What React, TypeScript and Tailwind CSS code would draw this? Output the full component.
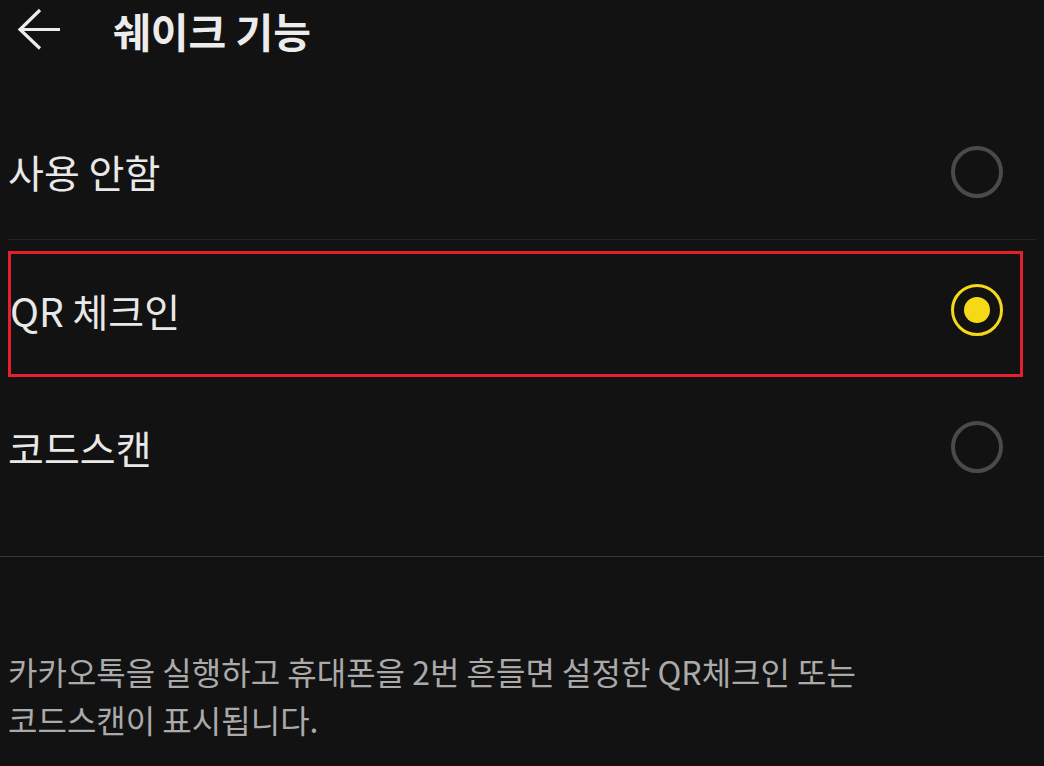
import React from "react";

const font = { fontFamily: '"Noto Sans CJK KR", "Noto Sans", sans-serif' };

function Radio({ checked }: { checked: boolean }) {
  return checked ? (
    <svg width="54" height="54" viewBox="0 0 54 54">
      <circle cx="27" cy="27" r="24.5" fill="none" stroke="#f5d816" strokeWidth="3" />
      <circle cx="27" cy="27" r="13" fill="#f5d816" />
    </svg>
  ) : (
    <svg width="54" height="54" viewBox="0 0 54 54">
      <circle cx="27" cy="27" r="24" fill="none" stroke="#4a4a4a" strokeWidth="4" />
    </svg>
  );
}

export default function App() {
  return (
    <div
      className="w-[1044px] h-[766px] bg-[#121212] overflow-hidden flex flex-col"
      style={font}
    >
      <div className="h-[60px] flex items-center">
        <svg width="80" height="60" viewBox="0 0 80 60" className="shrink-0">
          <path
            d="M60 29.5H20M40 10L20 29.5L40 48.5"
            fill="none"
            stroke="#ececec"
            strokeWidth="3.2"
          />
        </svg>
        <span className="ml-[33px] text-[41px] font-bold text-[#ececec] leading-none">
          쉐이크 기능
        </span>
      </div>

      <div className="pt-[44px]">
        <div className="h-[136px] mx-[8px] flex items-center justify-between border-b border-[#252525]">
          <span className="text-[39px] text-[#e8e8e8] leading-none">사용 안함</span>
          <div className="mr-[32px]">
            <Radio checked={false} />
          </div>
        </div>
        <div className="relative h-[140px] mx-[8px] flex items-center justify-between">
          <span className="text-[39px] text-[#e8e8e8] leading-none pl-[2px]">QR 체크인</span>
          <div className="mr-[32px]">
            <Radio checked={true} />
          </div>
          <div className="absolute left-0 top-[11px] w-[1015px] h-[126px] border-[3px] border-[#e3202b]" />
        </div>
        <div className="h-[134px] mx-[8px] flex items-center justify-between">
          <span className="text-[39px] text-[#e8e8e8] leading-none">코드스캔</span>
          <div className="mr-[32px]">
            <Radio checked={false} />
          </div>
        </div>
      </div>

      <div className="mt-[42px] h-px bg-[#373737]" />

      <div className="mt-[90px] px-[8px] text-[32px] leading-[48px] text-[#aaaaaa]">
        카카오톡을 실행하고 휴대폰을 2번 흔들면 설정한 QR체크인 또는
        <br />
        코드스캔이 표시됩니다.
      </div>
    </div>
  );
}
